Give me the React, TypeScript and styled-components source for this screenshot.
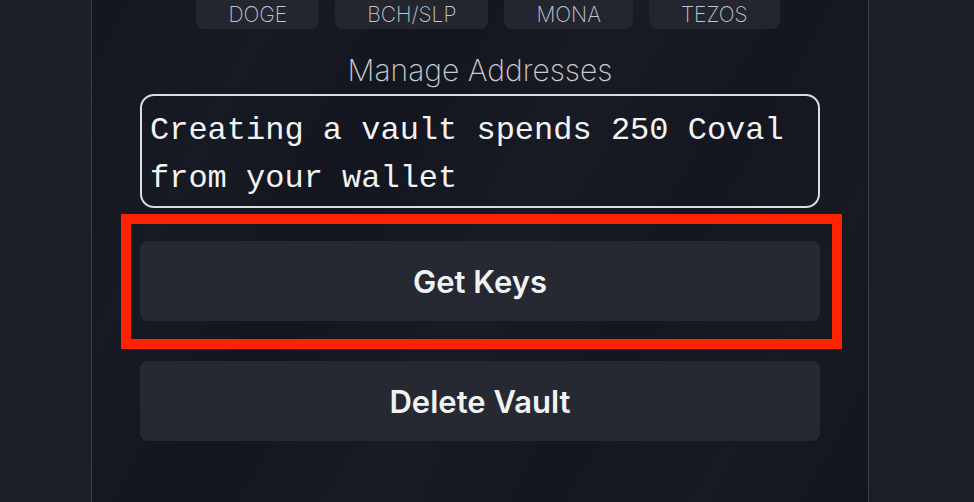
import React from 'react';
import styled, { createGlobalStyle } from 'styled-components';

const GlobalStyle = createGlobalStyle`
  html, body {
    margin: 0;
    padding: 0;
    height: 100%;
    background: #1b1e27;
    overflow: hidden;
  }
  #root {
    height: 100%;
  }
  * {
    box-sizing: border-box;
  }
`;

const Page = styled.div`
  height: 100%;
  padding-left: 91px;
  background: linear-gradient(120deg, #1b2029 0%, #1c1e27 40%, #1d1f28 100%);
`;

const Panel = styled.main`
  width: 778px;
  height: 100%;
  border-left: 1px solid #3a3d46;
  border-right: 1px solid #3a3d46;
  padding: 0 48px 0 48px;
  display: flex;
  flex-direction: column;
  background: linear-gradient(
    118deg,
    #14171f 0%,
    #171a22 18%,
    #13161e 34%,
    #181b23 52%,
    #14171f 68%,
    #171a21 84%,
    #13161d 100%
  );
`;

const ChipRow = styled.div`
  display: flex;
  justify-content: center;
  gap: 16px;
  margin-top: -7px;
  padding-left: 16px;
`;

const Chip = styled.div`
  height: 36px;
  padding: 0 32px 2px;
  display: flex;
  align-items: flex-end;
  border-radius: 8px;
  background: #23262e;
  color: #c4c6cb;
  font-family: Inter, 'Noto Sans', sans-serif;
  font-weight: 200;
  font-size: 21px;
`;

const Title = styled.h2`
  margin: 23px 0 0;
  text-align: center;
  font-family: Inter, 'Noto Sans', sans-serif;
  font-weight: 200;
  font-size: 30px;
  line-height: 36px;
  color: #c9cbd0;
`;

const Notice = styled.div`
  margin-top: 6px;
  height: 114px;
  padding: 11px 8px 3px 8px;
  border: 2px solid #d9dce3;
  border-radius: 14px;
  font-family: 'Courier New', Courier, 'Nimbus Mono PS', 'Nimbus Mono L', FreeMono, 'Liberation Mono', monospace;
  font-size: 32px;
  line-height: 48px;
  color: #f2f3f5;
`;

const Highlight = styled.div`
  margin: 6px -22px 12px -19px;
  padding: 17px 12px 18px 9px;
  border: 10px solid #ff2200;
`;

const ActionButton = styled.button`
  display: flex;
  width: 100%;
  height: 80px;
  align-items: center;
  justify-content: center;
  border: none;
  border-radius: 8px;
  background: #262931;
  color: #f1f2f4;
  font-family: Inter, 'Noto Sans', sans-serif;
  font-weight: 600;
  font-size: 31px;
  cursor: pointer;
`;

const chains = ['DOGE', 'BCH/SLP', 'MONA', 'TEZOS'];

const App: React.FC = () => {
  return (
    <>
      <GlobalStyle />
      <Page>
        <Panel>
          <ChipRow>
            {chains.map((c) => (
              <Chip key={c}>{c}</Chip>
            ))}
          </ChipRow>
          <Title>Manage Addresses</Title>
          <Notice>
            Creating a vault spends 250 Coval
            <br />
            from your wallet
          </Notice>
          <Highlight>
            <ActionButton>Get Keys</ActionButton>
          </Highlight>
          <ActionButton>Delete Vault</ActionButton>
        </Panel>
      </Page>
    </>
  );
};

export default App;
